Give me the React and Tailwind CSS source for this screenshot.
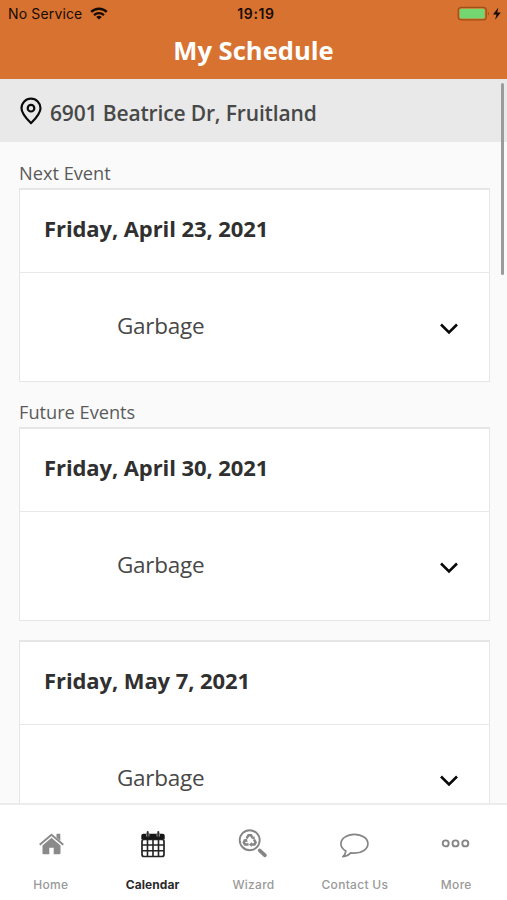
import React from "react";

function WifiIcon() {
  return (
    <svg className="ml-[8px] h-[13px] w-[18px]" viewBox="0 0 18 13" fill="none" stroke="#170b04">
      <path d="M1.2 4.9a11.2 11.2 0 0 1 15.6 0" strokeWidth="2.4" />
      <path d="M4 8.1a7.2 7.2 0 0 1 10 0" strokeWidth="2.2" />
      <path d="M9 12.4 6.2 9.9a4.2 4.2 0 0 1 5.6 0z" fill="#170b04" stroke="none" />
    </svg>
  );
}

function BatteryIcon() {
  return (
    <svg className="h-[16px] w-[46px]" viewBox="0 0 46 16">
      <rect x="1.2" y="1.3" width="28" height="12.6" rx="3" fill="none" stroke="#a04f17" strokeWidth="1.3" />
      <rect x="2.6" y="2.7" width="25.2" height="9.8" rx="1.6" fill="#74d671" />
      <path d="M30.9 5.7c1.6.6 1.6 3.2 0 3.8z" fill="#a04f17" />
      <path d="M41.400 1.600 36 8.400h3.500l-1.400 5.400L43.800 6.400h-3.600z" fill="#170b04" />
    </svg>
  );
}

function PinIcon() {
  return (
    <svg className="h-[28px] w-[22px]" viewBox="0 0 22 28" fill="none" stroke="#0b0b0b">
      <path d="M11 26.200C7.500 22.600 1.500 16.800 1.500 11.200a9.500 9.500 0 0 1 19 0C20.500 16.800 14.500 22.600 11 26.200z" strokeWidth="2.200" strokeLinejoin="round" />
      <circle cx="11" cy="11.200" r="3.300" strokeWidth="2.200" />
    </svg>
  );
}

function Chevron() {
  return (
    <svg className="h-[12px] w-[20px]" viewBox="0 0 20 12" fill="none" stroke="#080808" strokeWidth="2.600">
      <path d="M2 1.500 10 9.500 18 1.500" />
    </svg>
  );
}

function HomeIcon() {
  return (
    <svg className="h-8 w-8" viewBox="-0.5 0 32 32" fill="#8a8a8a">
      <path d="M21 5.700h3.800v7L21 9.500z" />
      <path d="M4.200 16.800 16 6.800l11.800 10" fill="none" stroke="#8a8a8a" strokeWidth="2" />
      <path d="M16 9.700 7 17.400v7.700c0 .8.400 1.200 1.200 1.200h5.600v-6.600h4.400v6.600h5.600c.8 0 1.200-.4 1.200-1.200v-7.700z" />
    </svg>
  );
}

function CalendarIcon() {
  return (
    <svg className="h-8 w-8" viewBox="-1 0 32 32" fill="none" stroke="#242424">
      <rect x="5" y="11.500" width="22" height="17" rx="2" strokeWidth="1.700" />
      <path d="M6.300 5.800h19.400a2 2 0 0 1 2 2v3.400H4.300V7.800a2 2 0 0 1 2-2z" fill="#161616" stroke="none" />
      <path d="M5 17h22M5 22.700h22M10.500 12v16.500M16 12v16.500M21.500 12v16.500" strokeWidth="1.600" />
      <path d="M10.700 5v3.500M21.300 5v3.500" stroke="#aaa" strokeWidth="3.400" />
      <path d="M10.700 4v4.500M21.300 4v4.500" stroke="#333" strokeWidth="2" strokeLinecap="round" />
    </svg>
  );
}

function WizardIcon() {
  return (
    <svg className="h-8 w-8" viewBox="0 0 32 32" fill="none" stroke="#858585">
      <circle cx="12.700" cy="12.200" r="10" strokeWidth="1.900" />
      <path d="M22.600 22.400 28 27.400" strokeWidth="3.600" strokeLinecap="round" />
      <g strokeWidth="2.500">
        <path d="M9.600 10.300l1.900-3.100h2.500l1.500 2.500" />
        <path d="M17.100 11.700l1.500 2.700-1.200 2.100h-3.300" />
        <path d="M11.600 16.500H8l-1.200-2.100 1.500-2.500" />
      </g>
      <g fill="#858585" stroke="none">
        <path d="M17.700 8.200v3.900l-3.500-1.800z" />
        <path d="M14.700 13.900v5.100l-2.700-2.500z" />
        <path d="M6 12l3.900-1.400.7 4z" />
      </g>
    </svg>
  );
}

function ChatIcon() {
  return (
    <svg className="h-8 w-8" viewBox="0.5 0 32 32" fill="none" stroke="#858585" strokeWidth="1.700" strokeLinejoin="round">
      <path d="M15.900 6.300c-7.500 0-13.500 4.300-13.500 9.500 0 3.100 1.800 5.500 4.900 7.300-.2 2.200-1 3.900-2.900 5.500 3.400-.4 6-1.700 7.900-3.700 1.200.2 2.400.3 3.600.3 7.500 0 13.500-4.100 13.500-9.400S23.400 6.300 15.900 6.300z" />
    </svg>
  );
}

function MoreIcon() {
  return (
    <svg className="h-8 w-8" viewBox="0 0 32 32" fill="none" stroke="#858585" strokeWidth="1.900">
      <circle cx="5.700" cy="15.400" r="3" />
      <circle cx="15.500" cy="15.400" r="3" />
      <circle cx="25.300" cy="15.400" r="3" />
    </svg>
  );
}

function EventCard({ date }) {
  return (
    <section className="h-[194px] shrink-0 border border-t-2 border-[#e6e6e6] bg-white">
      <h2 className="flex h-[82px] items-center pb-[6px] pl-6 text-[22px] font-bold tracking-[-0.09px] text-[#303030]">{date}</h2>
      <div className="flex h-[109px] items-center justify-between border-t border-[#e8e8e8] pr-[30px] pl-[97px]">
        <span className="pb-[2px] text-[22.5px] tracking-[-0.25px] text-[#484848]">Garbage</span>
        <span className="pt-[4px]"><Chevron /></span>
      </div>
    </section>
  );
}

const tabs = [
  { label: "Home", Icon: HomeIcon },
  { label: "Calendar", Icon: CalendarIcon, active: true },
  { label: "Wizard", Icon: WizardIcon },
  { label: "Contact Us", Icon: ChatIcon },
  { label: "More", Icon: MoreIcon },
];

export default function App() {
  return (
    <div className="relative flex h-[900px] w-[507px] flex-col overflow-hidden bg-[#fafafa] font-['Open_Sans','Noto_Sans',sans-serif] whitespace-nowrap">
      <header className="h-[79px] shrink-0 bg-[#d87231]">
        <div className="grid h-[27px] grid-cols-3 items-center pr-[4px] pl-[8px] font-['Inter',sans-serif] text-[14px] text-[#170b04]">
          <div className="flex items-center"><span className="tracking-[0.15px]">No Service</span><WifiIcon /></div>
          <div className="pl-[1px] text-center font-semibold tracking-[0.65px]">19:19</div>
          <div className="flex justify-end"><BatteryIcon /></div>
        </div>
        <h1 className="flex h-[48px] items-center justify-center text-[25.6px] font-bold text-white">My Schedule</h1>
      </header>

      <div className="flex h-[63px] shrink-0 items-center bg-[#e9e9e9] pl-5 text-[21px] font-semibold tracking-[-0.15px] text-[#484848]">
        <PinIcon />
        <span className="ml-2 pt-[7px]">6901 Beatrice Dr, Fruitland</span>
      </div>

      <main className="flex min-h-0 flex-1 flex-col overflow-hidden pr-[17px] pl-[19px]">
        <h3 className="flex h-[46px] shrink-0 items-end pb-[1px] text-[18.2px] leading-[28px] text-[#5a5a5a]">Next Event</h3>
        <EventCard date="Friday, April 23, 2021" />
        <h3 className="flex h-[45px] shrink-0 items-end pb-[1px] text-[18.2px] leading-[28px] text-[#5a5a5a]">Future Events</h3>
        <EventCard date="Friday, April 30, 2021" />
        <div className="h-[19px] shrink-0" />
        <EventCard date="Friday, May 7, 2021" />
      </main>

      <nav className="grid h-[97px] shrink-0 grid-cols-5 border-t-2 border-[#ececec] bg-white font-['Inter',sans-serif]">
        {tabs.map(({ label, Icon, active }) => (
          <div key={label} className="flex flex-col items-center pt-[23px]">
            <Icon />
            <span className={active ? "mt-[16px] pl-[1px] text-[12px] leading-[17px] font-bold tracking-[0.05px] text-[#2a2a2a]" : "mt-[16px] text-[12px] leading-[17px] font-medium tracking-[0.3px] text-[#999]"}>{label}</span>
          </div>
        ))}
      </nav>

      <div className="absolute top-[83px] right-[3px] h-[192px] w-[3px] rounded-full bg-[#9b9b9b]" />
    </div>
  );
}
